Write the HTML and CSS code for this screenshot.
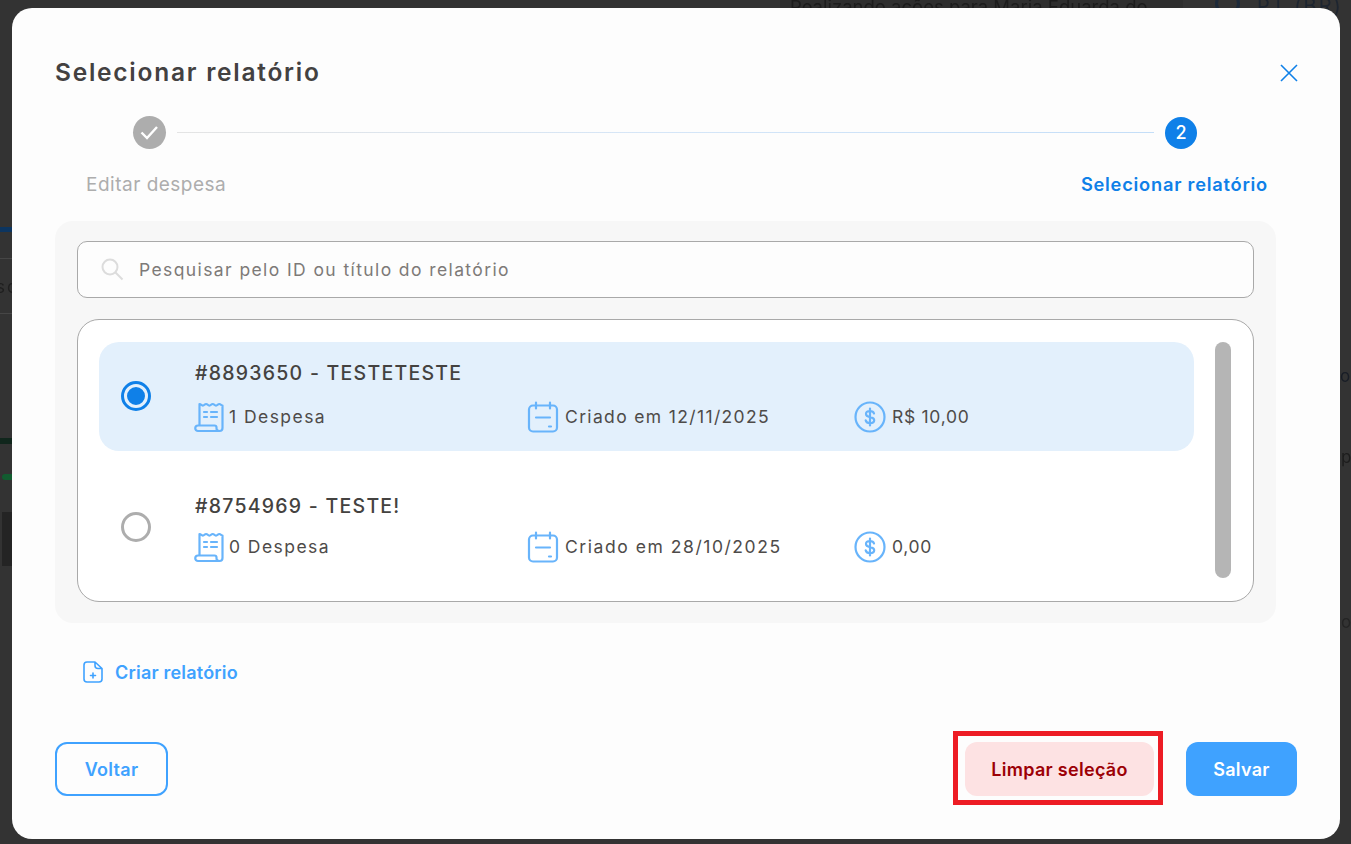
FILE: index.html
```html
<!DOCTYPE html>
<html lang="pt-BR">
<head>
<meta charset="utf-8">
<title>Selecionar relatório</title>
<link rel="stylesheet" href="styles.css">
</head>
<body>
<div class="backdrop">
  <span class="bg-strip"></span>
  <span class="bg-text bg-top">Realizando ações para Maria Eduarda do</span>
  <span class="bg-globe"></span>
  <span class="bg-text bg-lang">PT (BR)</span>
  <span class="bg-bar bg-bar-blue"></span>
  <span class="bg-text bg-so">so</span>
  <span class="bg-rule bg-rule-a"></span>
  <span class="bg-rule bg-rule-b"></span>
  <span class="bg-bar bg-bar-dark"></span>
  <span class="bg-bar bg-bar-green"></span>
  <span class="bg-block"></span>
  <span class="bg-text bg-r1">o</span>
  <span class="bg-text bg-r2">p</span>
  <span class="bg-text bg-r3">o</span>
</div>
<main class="modal">
  <header class="modal-head">
    <h1 class="title">Selecionar relatório</h1>
    <svg class="close" viewBox="0 0 18 18" width="18" height="18"><path d="M1 1l16 16M17 1L1 17"/></svg>
  </header>

  <div class="stepper">
    <span class="step step-done"><svg viewBox="0 0 33 33" width="33" height="33"><path d="M8.500 16.500l5.500 5.500 10-11"/></svg></span>
    <span class="step-line"></span>
    <span class="step step-current">2</span>
  </div>
  <div class="step-labels">
    <span class="label-done">Editar despesa</span>
    <span class="label-current">Selecionar relatório</span>
  </div>

  <section class="panel">
    <div class="search">
      <svg class="search-icon" viewBox="0 0 24 24" width="24" height="24"><circle cx="9" cy="9" r="7.500"/><path d="M14.500 14.500l7 7"/></svg>
      <span class="search-text">Pesquisar pelo ID ou título do relatório</span>
    </div>
    <div class="list">
      <div class="rows">
        <article class="row row-selected">
          <span class="radio radio-on"></span>
          <div class="row-body">
            <h2 class="row-title">#8893650 - TESTETESTE</h2>
            <div class="meta">
              <span class="meta-item meta-a">
                <svg class="ico" viewBox="0 0 32 32" width="32" height="32"><path d="M5.500 24.500V3c1.700 0 1.700 1.600 3.300 1.600S10.500 3 12.100 3s1.700 1.600 3.300 1.600S17.100 3 18.700 3s1.700 1.600 3.300 1.600S23.700 3 25.300 3s1.600 1.600 3.200 1.600V27a3 3 0 0 1-3 3H4a2.750 2.750 0 0 1 0-5.500h16.500c1.200 0 2 .8 2 2v1c0 1.200.8 2.500 3 2.500"/><path d="M10 11h3M17 11h6M10 16h3M17 16h6"/></svg>
                <span class="meta-text meta-text-tight">1 Despesa</span>
              </span>
              <span class="meta-item meta-b">
                <svg class="ico" viewBox="0 0 32 32" width="32" height="32"><rect x="2" y="4.500" width="28" height="26" rx="4"/><path d="M9 1.500v6M23 1.500v6M9 16.500h14M22 25.500h2"/></svg>
                <span class="meta-text">Criado em 12/11/2025</span>
              </span>
              <span class="meta-item">
                <svg class="ico" viewBox="0 0 32 32" width="32" height="32"><circle cx="16" cy="16" r="14.500"/><path d="M20 12.500c-.5-1.700-2-2.500-4-2.500-2.300 0-4 1.100-4 3 0 4.500 8.200 1.800 8.200 6.200 0 1.900-1.800 2.900-4.200 2.900-2.100 0-3.800-.9-4.300-2.700M16 7.500v17"/></svg>
                <span class="meta-text meta-money">R$ 10,00</span>
              </span>
            </div>
          </div>
        </article>
        <article class="row row-plain">
          <span class="radio"></span>
          <div class="row-body">
            <h2 class="row-title">#8754969 - TESTE!</h2>
            <div class="meta">
              <span class="meta-item meta-a">
                <svg class="ico" viewBox="0 0 32 32" width="32" height="32"><path d="M5.500 24.500V3c1.700 0 1.700 1.600 3.300 1.600S10.500 3 12.100 3s1.700 1.600 3.300 1.600S17.100 3 18.700 3s1.700 1.600 3.300 1.600S23.700 3 25.300 3s1.600 1.600 3.200 1.600V27a3 3 0 0 1-3 3H4a2.750 2.750 0 0 1 0-5.500h16.500c1.200 0 2 .8 2 2v1c0 1.200.8 2.500 3 2.500"/><path d="M10 11h3M17 11h6M10 16h3M17 16h6"/></svg>
                <span class="meta-text meta-text-tight">0 Despesa</span>
              </span>
              <span class="meta-item meta-b">
                <svg class="ico" viewBox="0 0 32 32" width="32" height="32"><rect x="2" y="4.500" width="28" height="26" rx="4"/><path d="M9 1.500v6M23 1.500v6M9 16.500h14M22 25.500h2"/></svg>
                <span class="meta-text meta-date-wide">Criado em 28/10/2025</span>
              </span>
              <span class="meta-item">
                <svg class="ico" viewBox="0 0 32 32" width="32" height="32"><circle cx="16" cy="16" r="14.500"/><path d="M20 12.500c-.5-1.700-2-2.500-4-2.500-2.300 0-4 1.100-4 3 0 4.500 8.200 1.800 8.200 6.200 0 1.900-1.800 2.900-4.200 2.900-2.100 0-3.800-.9-4.300-2.700M16 7.500v17"/></svg>
                <span class="meta-text meta-money">0,00</span>
              </span>
            </div>
          </div>
        </article>
      </div>
      <div class="scrollbar"></div>
    </div>
  </section>

  <div class="create">
    <svg class="create-icon" viewBox="0 0 20 22" width="20" height="22"><path d="M12 1H4a3 3 0 0 0-3 3v14a3 3 0 0 0 3 3h12a3 3 0 0 0 3-3V7.500zM12 1v3.500a3 3 0 0 0 3 3h4M10 12v5M7.500 14.500h5"/></svg>
    <span>Criar relatório</span>
  </div>

  <footer class="actions">
    <button class="btn btn-back">Voltar</button>
    <div class="actions-right">
      <div class="clear-wrap">
        <button class="btn btn-clear">Limpar seleção</button>
        <span class="annotation"></span>
      </div>
      <button class="btn btn-save">Salvar</button>
    </div>
  </footer>
</main>
</body>
</html>
```
FILE: styles.css
```css
* { box-sizing: border-box; }
html, body { margin: 0; height: 100%; }
body {
  width: 1351px;
  height: 844px;
  overflow: hidden;
  position: relative;
  background: #333333;
  font-family: "Inter", "Liberation Sans", sans-serif;
  color: #444240;
  padding: 8px 11px 5px 12px;
}

.backdrop { position: absolute; inset: 0; filter: blur(0.7px); }
.bg-strip { position: absolute; left: 780px; top: 0; width: 403px; height: 8px; background: #2e2e2e; }
.bg-text { position: absolute; color: #1c1c1c; font-size: 18.500px; white-space: nowrap; line-height: 20px; }
.bg-top { left: 790px; top: -3px; }
.bg-globe { position: absolute; left: 1215px; top: -9px; width: 25px; height: 25px; border: 3px solid #1d2a3a; border-radius: 50%; }
.bg-lang { left: 1257px; top: -4px; font-size: 20px; letter-spacing: 2px; color: #1d2530; }
.bg-so { left: -4px; top: 277px; font-size: 17px; color: #1f1f1f; letter-spacing: 2px; }
.bg-r1 { left: 1340px; top: 366px; font-size: 17px; color: #181d26; }
.bg-r2 { left: 1341px; top: 447px; font-size: 17px; }
.bg-r3 { left: 1341px; top: 612px; font-size: 17px; color: #242424; }
.bg-bar { position: absolute; left: 0; width: 12px; }
.bg-bar-blue { top: 227px; height: 5px; background: #0c3560; }
.bg-bar-dark { top: 438px; height: 6px; background: #10261c; }
.bg-bar-green { top: 474px; height: 6px; left: 2px; width: 10px; background: #125c30; border-radius: 3px 0 0 3px; }
.bg-rule { position: absolute; left: 0; width: 12px; height: 1px; background: #464646; }
.bg-rule-a { top: 258px; }
.bg-rule-b { top: 313px; }
.bg-block { position: absolute; left: 2px; top: 512px; width: 10px; height: 54px; background: #242424; }

.modal {
  position: relative;
  width: 1328px;
  height: 831px;
  background: #fdfdfd;
  border-radius: 20px;
  padding: 44px 43px 43px 43px;
  display: flex;
  flex-direction: column;
}

.modal-head { display: flex; justify-content: space-between; align-items: center; height: 42px; }
.title { margin: 0 0 2px; font-size: 24.500px; font-weight: 600; letter-spacing: 1.750px; color: #434141; line-height: 40px; }
.close { margin-right: -1px; }
.close path { fill: none; stroke: #0f80e8; stroke-width: 1.600; }

.stepper { display: flex; align-items: center; margin: 22px 0 0 78px; width: 1064px; height: 33px; }
.step { flex: none; height: 33px; border-radius: 50%; display: flex; align-items: center; justify-content: center; }
.step-done { width: 33px; background: #adadad; }
.step-done path { fill: none; stroke: #fff; stroke-width: 2.400; }
.step-line { flex: 1; height: 1px; margin: 0 11px; background: linear-gradient(90deg, #e4e4e4, #d5e6f8 50%, #c4def8); }
.step-current { width: 32px; height: 32px; background: #0f80e8; color: #fff; font-size: 18px; font-weight: 500; }

.step-labels { display: flex; justify-content: space-between; align-items: baseline; margin: 23px 0 0 31px; width: 1182px; height: 24px; line-height: 24px; }
.label-done { color: #adadad; font-size: 19px; letter-spacing: 0.500px; }
.label-current { color: #0f80e8; font-weight: 600; font-size: 18.300px; letter-spacing: 0.750px; }

.panel {
  width: 1221px;
  height: 402px;
  margin-top: 25px;
  background: #f7f7f7;
  border-radius: 18px;
  padding: 20px 22px 21px;
  display: flex;
  flex-direction: column;
  gap: 21px;
}

.search {
  flex: none;
  height: 57px;
  display: flex;
  align-items: center;
  gap: 14px;
  padding-left: 23px;
  background: #fdfdfd;
  border: 1px solid #a9a9a9;
  border-radius: 10px;
}
.search-icon circle, .search-icon path { fill: none; stroke: #dcdcdc; stroke-width: 2; }
.search-text { font-size: 17.500px; letter-spacing: 1.400px; color: #7d7a78; }

.list {
  flex: 1;
  background: #fff;
  border: 1px solid #a9a9a9;
  border-radius: 22px;
  padding: 22px 22px 20px 21px;
  display: flex;
  gap: 21px;
}
.rows { flex: 1; display: flex; flex-direction: column; gap: 22px; }
.row { border-radius: 20px; display: flex; align-items: center; padding-left: 22px; }
.row-selected { height: 109px; padding-bottom: 2px; background: #e3f0fc; }
.row-plain { height: 108px; }
.radio { flex: none; width: 30px; height: 30px; border-radius: 50%; border: 3px solid #adadad; background: #fff; }
.radio-on { border: 3.500px solid #0f80e8; background: #0f80e8; position: relative; }
.radio-on::after { content: ""; position: absolute; inset: 0; border-radius: 50%; border: 3.500px solid #e3f0fc; }
.row-body { margin-left: 44px; display: flex; flex-direction: column; gap: 14px; }
.row-plain .row-body { gap: 11px; }
.row-title { margin: 0; font-size: 19.500px; font-weight: 500; letter-spacing: 1.250px; line-height: 28px; color: #444240; }
.meta { display: flex; align-items: center; height: 32px; margin-left: -1px; }
.meta-item { display: flex; align-items: center; gap: 6px; font-size: 17.500px; letter-spacing: 1.350px; color: #4e4b49; white-space: nowrap; }
.meta-a { width: 333px; }
.meta-b { width: 327px; }
.meta-text-tight { margin-left: -3px; letter-spacing: 1.450px; }
.meta-date-wide { letter-spacing: 1.550px; }
.meta-money { letter-spacing: 0.700px; }
.ico { flex: none; }
.ico path, .ico rect, .ico circle { fill: none; stroke: #68b4fb; stroke-width: 2.200; stroke-linecap: round; stroke-linejoin: round; }

.scrollbar { flex: none; width: 16px; height: 236px; border-radius: 8px; background: #b5b5b5; }

.create { display: flex; align-items: center; gap: 12px; margin: 37px 0 0 28px; height: 24px; font-size: 18px; font-weight: 600; letter-spacing: 0.200px; color: #3fa2ff; }
.create-icon path { fill: none; stroke: #3fa2ff; stroke-width: 1.600; stroke-linecap: round; stroke-linejoin: round; }

.actions { display: flex; justify-content: space-between; margin-top: 58px; width: 1242px; }
.actions-right { display: flex; gap: 32px; }
.clear-wrap { position: relative; }
.btn { height: 54px; border-radius: 12px; border: none; font-family: inherit; font-size: 18px; font-weight: 600; letter-spacing: 0.300px; padding: 0; display: block; }
.btn-back { width: 113px; background: #fdfdfd; border: 2px solid #3fa2ff; color: #3fa2ff; }
.btn-clear { width: 189px; background: #fde2e3; color: #9c0006; }
.btn-save { width: 111px; background: #3fa2ff; color: #fff; }
.annotation { position: absolute; left: -12px; top: -11px; width: 210px; height: 74px; border: 5px solid #ed1c24; pointer-events: none; }
```
